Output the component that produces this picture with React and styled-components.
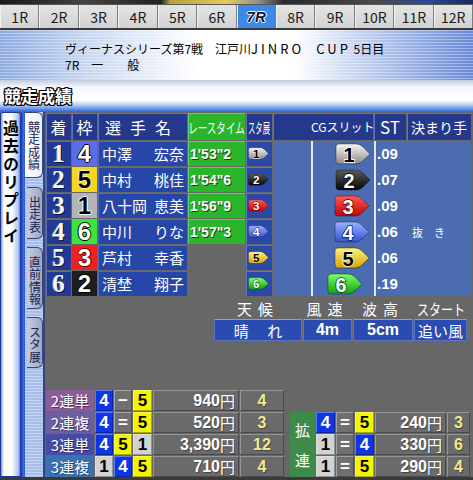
import React from "react";
import styled, { createGlobalStyle, css } from "styled-components";

const GlobalStyle = createGlobalStyle`
  html, body { margin: 0; padding: 0; }
  body { background: #676767; font-family: "Noto Sans CJK JP", "Noto Sans", sans-serif; }
  #root { width: 473px; height: 480px; overflow: hidden; }
`;

const Page = styled.div`
  width: 473px;
  height: 480px;
  display: flex;
  flex-direction: column;
  background: #676767;
  overflow: hidden;
`;

const TopStrip = styled.div`
  height: 4px;
  flex: none;
  background: linear-gradient(90deg, #1a1a1a 0%, #444 18%, #222 34%, #b8a040 36%, #e6cc5a 48%, #8a8a8a 55%, #2a2a2a 60%, #4a4a4a 80%, #2a4a9a 90%, #1a2a60 100%);
`;

const RaceTabs = styled.div`
  flex: none;
  height: 26px;
  box-sizing: border-box;
  display: grid;
  grid-template-columns: repeat(12, 1fr);
  border-top: 1px solid #555;
  border-bottom: 2px solid #3a3a3a;
  background: #d6d6d6;
`;

const RaceTab = styled.div`
  display: flex;
  align-items: center;
  justify-content: center;
  border-left: 1px solid #f2f2f2;
  border-right: 1px solid #7c7c7c;
  background: linear-gradient(#e4e4e4, #d2d2d2);
  font-size: 14px;
  line-height: 1;
  color: #1a1a1a;
  ${(p) =>
    p.$active &&
    css`
      background: #3c8ae6;
      font-family: "Liberation Sans", sans-serif;
      font-weight: bold;
      font-style: italic;
      font-size: 15px;
      color: #0a1838;
      text-shadow: 1px 0 0 #fff, -1px 0 0 #fff, 0 1px 0 #fff, 0 -1px 0 #fff;
    `}
`;

const TitleArea = styled.div`
  flex: none;
  height: 50px;
  box-sizing: border-box;
  padding: 11px 0 0 65px;
  font-size: 12px;
  line-height: 16px;
  color: #000;
  background:
    repeating-linear-gradient(180deg, rgba(255, 255, 255, 0.35) 0 1px, rgba(255, 255, 255, 0) 1px 3px),
    linear-gradient(90deg, #8eaae2 0%, #c8d6f0 18%, #ffffff 42%, #ffffff 62%, #c4d2f0 76%, #6a8ad8 100%);
`;

const TitleLine = styled.div`
  white-space: pre;
`;

const Latin = styled.span`
  font-size: 13px;
  letter-spacing: ${(p) => p.$ls}px;
`;

const SectionBar = styled.div`
  flex: none;
  height: 32px;
  box-sizing: border-box;
  padding: 4px 0 0 4px;
  background: linear-gradient(180deg, #c2cde2 0px, #f4f7fc 7px, #ffffff 20px, #b6cdf4 25px, #2a64e0 32px);
`;

const SectionTitle = styled.span`
  font-size: 17px;
  line-height: 20px;
  font-weight: bold;
  color: #fff;
  text-shadow: 1px 0 0 #000, -1px 0 0 #000, 0 1px 0 #000, 0 -1px 0 #000, 1px 1px 0 #000, -1px -1px 0 #000, 1px -1px 0 #000, -1px 1px 0 #000;
`;

const Main = styled.div`
  flex: 1;
  display: flex;
  min-height: 0;
`;

const BottomStrip = styled.div`
  flex: none;
  height: 3px;
  background: #3a3a3a;
`;

const ReplayPanel = styled.div`
  width: 21px;
  flex: none;
  border-radius: 3px 3px 0 0;
  box-shadow: inset 0 0 0 1px #1a3a9a;
  background: linear-gradient(90deg, #4a6ad0 0%, #ffffff 18%, #ffffff 55%, #b8c8f4 85%, #4a6ad8 100%);
  display: flex;
  justify-content: center;
  padding-top: 8px;
`;

const ReplayText = styled.div`
  writing-mode: vertical-rl;
  text-orientation: upright;
  font-size: 16px;
  line-height: 17px;
  font-weight: bold;
  letter-spacing: 2px;
  color: #000;
`;

const BlueStripe = styled.div`
  width: 4px;
  flex: none;
  background: linear-gradient(90deg, #1a3aa0, #3a6ae8 60%, #2a56d0);
`;

const TabColumn = styled.div`
  width: 20px;
  flex: none;
  box-sizing: border-box;
  border-right: 2px solid #34457e;
  background: repeating-linear-gradient(180deg, #c6d4f4 0 1px, #a9bde9 1px 3px);
  display: flex;
  flex-direction: column;
  gap: 8px;
`;

const SideTab = styled.div`
  height: ${(p) => p.$h}px;
  width: ${(p) => (p.$active ? 18 : 16)}px;
  margin-left: ${(p) => (p.$active ? 0 : 2)}px;
  margin-top: ${(p) => p.$mt || 0}px;
  box-sizing: border-box;
  border: 1px solid #3a4670;
  border-left: none;
  border-radius: 0 6px 6px 0;
  background: ${(p) => (p.$active ? "linear-gradient(90deg, #ffffff, #e8eefc)" : "linear-gradient(90deg, #c4cce0, #9ea8c4)")};
  display: flex;
  justify-content: center;
  padding-top: 8px;
`;

const SideTabText = styled.div`
  writing-mode: vertical-rl;
  text-orientation: upright;
  font-size: 12px;
  line-height: 14px;
  letter-spacing: 0.5px;
  color: #1a2450;
`;

const Content = styled.div`
  flex: 1;
  display: flex;
  flex-direction: column;
  margin-left: 1px;
  padding-top: 1px;
`;

const ResultGrid = styled.div`
  display: grid;
  grid-template-columns: 25px 25px 89px 57px 26px 100px 32px 64px;
  grid-template-rows: 27px repeat(6, 25px);
  gap: 1px;
`;

const HeadCell = styled.div`
  display: flex;
  align-items: center;
  justify-content: ${(p) => (p.$pl ? "flex-start" : "center")};
  padding-left: ${(p) => p.$pl || 0}px;
  background: ${(p) => (p.$green ? "#2ab52a" : "#25398c")};
  box-shadow: inset 1px 1px 0 rgba(255, 255, 255, 0.3);
  color: #fff;
  font-size: ${(p) => p.$fs || 16}px;
  line-height: 1;
  letter-spacing: ${(p) => p.$ls || 0}px;
  white-space: nowrap;
`;

const Squeeze = styled.span`
  display: inline-block;
  transform: scaleX(${(p) => p.$sx});
  transform-origin: center;
  white-space: nowrap;
`;

const RankCell = styled.div`
  display: flex;
  align-items: center;
  justify-content: center;
  background: #233a94;
  box-shadow: inset 1px 1px 0 rgba(255, 255, 255, 0.25);
  font-family: "Liberation Serif", serif;
  font-weight: bold;
  font-size: 25px;
  line-height: 22px;
  color: #f6f6f6;
  text-shadow: 1px 1px 0 #0a1440, -1px 0 0 #7080b0;
`;

const FRAME = {
  1: { bg: "#b4b4b4", fg: "#000", ol: "#fff" },
  2: { bg: "#1e1e1e", fg: "#fff", ol: "#000" },
  3: { bg: "#ee2020", fg: "#fff", ol: "#600" },
  4: { bg: "#5a6eea", fg: "#fff", ol: "#000" },
  5: { bg: "#f8d41e", fg: "#000", ol: "#fff2a0" },
  6: { bg: "#3ee43e", fg: "#fff", ol: "#000" },
};

const FrameCell = styled.div`
  display: flex;
  align-items: center;
  justify-content: center;
  background: ${(p) => FRAME[p.$n].bg};
  font-family: "Liberation Sans", sans-serif;
  font-weight: bold;
  font-size: 24px;
  line-height: 22px;
  color: ${(p) => FRAME[p.$n].fg};
  text-shadow: 1px 0 0 ${(p) => FRAME[p.$n].ol}, -1px 0 0 ${(p) => FRAME[p.$n].ol}, 0 1px 0 ${(p) => FRAME[p.$n].ol}, 0 -1px 0 ${(p) => FRAME[p.$n].ol};
`;

const NameCell = styled.div`
  display: flex;
  align-items: center;
  justify-content: space-between;
  padding: 0 3px 0 4px;
  background: #2646a8;
  box-shadow: inset 1px 1px 0 rgba(255, 255, 255, 0.2);
  color: #fff;
  font-size: 15px;
  line-height: 1;
`;

const TimeCell = styled.div`
  display: flex;
  align-items: center;
  padding-left: 2px;
  background: ${(p) => (p.$empty ? "transparent" : "#2ab52a")};
  box-shadow: ${(p) => (p.$empty ? "none" : "inset 1px 1px 0 rgba(255,255,255,0.3)")};
  color: #fff;
  font-family: "Liberation Sans", sans-serif;
  font-weight: bold;
  font-size: 14px;
  text-shadow: 1px 1px 0 #0a4a0a;
`;

const ExCell = styled.div`
  display: flex;
  align-items: center;
  padding-left: 2px;
  background: #2b4aa8;
  box-shadow: inset 1px 1px 0 rgba(255, 255, 255, 0.25);
`;

const SlitPanel = styled.div`
  grid-column: 6 / span 3;
  grid-row: 2 / span 6;
  display: flex;
  background: #4b6cb0;
`;

const SlitGap = styled.div`
  width: 38px;
  flex: none;
`;

const Lane = styled.div`
  width: ${(p) => (p.$w ? `${p.$w}px` : "auto")};
  flex: ${(p) => (p.$w ? "none" : 1)};
  box-sizing: border-box;
  border-left: 2px solid #e4eaf8;
  display: flex;
  flex-direction: column;
  gap: 1px;
`;

const LaneRow = styled.div`
  height: 25px;
  display: flex;
  align-items: center;
  padding-left: ${(p) => p.$pl || 0}px;
`;

const StValue = styled.span`
  width: 35px;
  flex: none;
  color: #fff;
  font-family: "Liberation Sans", sans-serif;
  font-weight: bold;
  font-size: 15px;
`;

const Kimarite = styled.span`
  color: #fff;
  font-size: 11px;
  white-space: pre;
`;

const WeatherGrid = styled.div`
  margin: 3px 0 0 168px;
  display: grid;
  grid-template-columns: 88px 49px 60px 53px;
  grid-template-rows: 19px 22px;
  column-gap: 1px;
  row-gap: 1px;
`;

const WeatherLabel = styled.div`
  display: flex;
  align-items: center;
  justify-content: center;
  color: #fff;
  font-size: 15px;
  line-height: 1;
  letter-spacing: ${(p) => p.$ls || 0}px;
  white-space: nowrap;
`;

const WeatherValue = styled.div`
  display: flex;
  align-items: center;
  justify-content: center;
  box-sizing: border-box;
  border: 1px solid #5a72c0;
  border-top-color: #8a9ee0;
  background: #2a4cb0;
  color: #fff;
  font-size: 15px;
  line-height: 1;
  white-space: pre;
  ${(p) =>
    p.$bold &&
    css`
      font-family: "Liberation Sans", sans-serif;
      font-weight: bold;
      font-size: 16px;
    `}
`;

const PayoutArea = styled.div`
  margin-top: auto;
  display: flex;
  align-items: flex-end;
  gap: 6px;
`;

const PayGrid = styled.div`
  display: grid;
  grid-template-columns: ${(p) => p.$cols};
  grid-auto-rows: 21px;
  gap: 1px;
`;

const BetLabel = styled.div`
  display: flex;
  align-items: center;
  justify-content: center;
  background: ${(p) => p.$bg};
  color: #fff;
  font-size: 15px;
  line-height: 1;
  text-shadow: 1px 1px 0 rgba(0, 0, 0, 0.45);
`;

const WideLabel = styled.div`
  grid-row: span 3;
  display: flex;
  flex-direction: column;
  align-items: center;
  justify-content: space-around;
  padding: 2px 0;
  background: #3e8a4a;
  color: #fff;
  font-size: 15px;
  line-height: 1;
`;

const NUM = {
  b: { bg: "#0e36e6", fg: "#fff" },
  y: { bg: "#f4f400", fg: "#000" },
  w: { bg: "#d2d2d2", fg: "#000" },
  s: { bg: "#707070", fg: "#fff" },
};

const NumCell = styled.div`
  display: flex;
  align-items: center;
  justify-content: center;
  box-sizing: border-box;
  border: 1px solid rgba(255, 255, 255, 0.35);
  border-right-color: rgba(0, 0, 0, 0.3);
  border-bottom-color: rgba(0, 0, 0, 0.3);
  background: ${(p) => NUM[p.$c].bg};
  color: ${(p) => NUM[p.$c].fg};
  font-family: "Liberation Sans", sans-serif;
  font-weight: bold;
  font-size: 17px;
  line-height: 1;
`;

const GrayCell = styled.div`
  display: flex;
  align-items: center;
  justify-content: ${(p) => (p.$right ? "flex-end" : "center")};
  padding-right: ${(p) => (p.$right ? 3 : 0)}px;
  box-sizing: border-box;
  border: 1px solid #959595;
  border-right-color: #4a4a4a;
  border-bottom-color: #4a4a4a;
  background: #6a6a6a;
  color: ${(p) => (p.$yellow ? "#f2ea8a" : "#fff")};
  font-family: "Liberation Sans", "Noto Sans CJK JP", sans-serif;
  font-weight: bold;
  font-size: 16px;
  line-height: 1;
  text-shadow: 1px 1px 0 rgba(0, 0, 0, 0.35);
`;

const Yen = styled.span`
  font-family: "Noto Sans CJK JP", sans-serif;
  font-weight: normal;
  font-size: 15px;
`;

const BOAT = {
  1: { top: "#f6f6f6", bot: "#8a8a8a", num: "#000", stroke: "#fff" },
  2: { top: "#5a5a5a", bot: "#050505", num: "#fff", stroke: "#000" },
  3: { top: "#ff5a5a", bot: "#c40000", num: "#fff", stroke: "#5a0000" },
  4: { top: "#9ab0ff", bot: "#3452d4", num: "#fff", stroke: "#10207a" },
  5: { top: "#fff27a", bot: "#d8a400", num: "#000", stroke: "#fff6c0" },
  6: { top: "#7aff6a", bot: "#12a012", num: "#fff", stroke: "#064006" },
};

function Boat({ n, w, h, tag }) {
  const c = BOAT[n];
  const id = `boat-${tag}-${n}`;
  return (
    <svg width={w} height={h} viewBox="0 0 36 22">
      <defs>
        <linearGradient id={id} x1="0" y1="0" x2="0" y2="1">
          <stop offset="0" stopColor={c.top} />
          <stop offset="1" stopColor={c.bot} />
        </linearGradient>
      </defs>
      <path
        d="M4 1 H21 Q25 1 28 4 L35 11 L28 18 Q25 21 21 21 H4 Q1 21 1 18 V4 Q1 1 4 1 Z"
        fill={`url(#${id})`}
        stroke="rgba(0,0,0,0.45)"
        strokeWidth="0.8"
      />
      <text
        x="14"
        y="18.5"
        textAnchor="middle"
        fontFamily="Liberation Sans, sans-serif"
        fontWeight="bold"
        fontSize="20"
        fill={c.num}
        stroke={c.stroke}
        strokeWidth="1.6"
        paintOrder="stroke"
      >
        {n}
      </text>
    </svg>
  );
}

const RACES = ["1R", "2R", "3R", "4R", "5R", "6R", "7R", "8R", "9R", "10R", "11R", "12R"];

const RESULTS = [
  { rank: 1, frame: 4, last: "中澤", first: "宏奈", time: `1'53"2` },
  { rank: 2, frame: 5, last: "中村", first: "桃佳", time: `1'54"6` },
  { rank: 3, frame: 1, last: "八十岡", first: "恵美", time: `1'56"9` },
  { rank: 4, frame: 6, last: "中川", first: "りな", time: `1'57"3` },
  { rank: 5, frame: 3, last: "芦村", first: "幸香", time: "" },
  { rank: 6, frame: 2, last: "清埜", first: "翔子", time: "" },
];

const SLIT_ORDER = [1, 2, 3, 4, 5, 6];
const SLIT_OFFSET = { 1: 22, 2: 22, 3: 21, 4: 21, 5: 21, 6: 14 };
const SLIT_ST = { 1: ".09", 2: ".07", 3: ".09", 4: ".06", 5: ".06", 6: ".19" };
const SLIT_K = { 4: "抜　き" };

const PAYOUTS = [
  { label: "2連単", bg: "#8c5c98", nums: [["4", "b"], ["−", "s"], ["5", "y"]], amt: "940", pop: "4" },
  { label: "2連複", bg: "#6c5ea0", nums: [["4", "b"], ["=", "s"], ["5", "y"]], amt: "520", pop: "3" },
  { label: "3連単", bg: "#464ca6", nums: [["4", "b"], ["5", "y"], ["1", "w"]], amt: "3,390", pop: "12" },
  { label: "3連複", bg: "#3872b4", nums: [["1", "w"], ["4", "b"], ["5", "y"]], amt: "710", pop: "4" },
];

const WIDE = [
  { nums: [["4", "b"], ["=", "s"], ["5", "y"]], amt: "240", pop: "3" },
  { nums: [["1", "w"], ["=", "s"], ["4", "b"]], amt: "330", pop: "6" },
  { nums: [["1", "w"], ["=", "s"], ["5", "y"]], amt: "290", pop: "4" },
];

export default function App() {
  return (
    <Page>
      <GlobalStyle />
      <TopStrip />
      <RaceTabs>
        {RACES.map((r) => (
          <RaceTab key={r} $active={r === "7R"}>
            {r}
          </RaceTab>
        ))}
      </RaceTabs>
      <TitleArea>
        <TitleLine>
          ヴィーナスシリーズ第7戦　江戸川<Latin $ls={3}>JINRO</Latin>　<Latin $ls={3}>CUP</Latin> 5日目
        </TitleLine>
        <TitleLine>7R　一　　般</TitleLine>
      </TitleArea>
      <SectionBar>
        <SectionTitle>競走成績</SectionTitle>
      </SectionBar>
      <Main>
        <ReplayPanel>
          <ReplayText>過去のリプレイ</ReplayText>
        </ReplayPanel>
        <BlueStripe />
        <TabColumn>
          <SideTab $h={66} $active>
            <SideTabText>競走成績</SideTabText>
          </SideTab>
          <SideTab $h={52} $mt={1}>
            <SideTabText>出走表</SideTabText>
          </SideTab>
          <SideTab $h={62}>
            <SideTabText>直前情報</SideTabText>
          </SideTab>
          <SideTab $h={51}>
            <SideTabText>スタ展</SideTabText>
          </SideTab>
        </TabColumn>
        <Content>
          <ResultGrid>
            <HeadCell>着</HeadCell>
            <HeadCell>枠</HeadCell>
            <HeadCell $ls={9}>選手名</HeadCell>
            <HeadCell $green $fs={14}>
              <Squeeze $sx={0.68}>レースタイム</Squeeze>
            </HeadCell>
            <HeadCell $fs={14}>
              <Squeeze $sx={0.52}>スタ展</Squeeze>
            </HeadCell>
            <HeadCell $fs={12} $pl={38}>
              CGスリット
            </HeadCell>
            <HeadCell $fs={17}>ST</HeadCell>
            <HeadCell $fs={14}>決まり手</HeadCell>

            {RESULTS.map((r, i) => (
              <React.Fragment key={r.rank}>
                <RankCell>{r.rank}</RankCell>
                <FrameCell $n={r.frame}>{r.frame}</FrameCell>
                <NameCell>
                  <span>{r.last}</span>
                  <span>{r.first}</span>
                </NameCell>
                <TimeCell $empty={!r.time}>{r.time}</TimeCell>
                <ExCell>
                  <Boat n={i + 1} w={21} h={13} tag="ex" />
                </ExCell>
              </React.Fragment>
            ))}

            <SlitPanel>
              <SlitGap />
              <Lane $w={63}>
                {SLIT_ORDER.map((n) => (
                  <LaneRow key={n} $pl={SLIT_OFFSET[n]}>
                    <Boat n={n} w={36} h={22} tag="slit" />
                  </LaneRow>
                ))}
              </Lane>
              <Lane>
                {SLIT_ORDER.map((n) => (
                  <LaneRow key={n} $pl={1}>
                    <StValue>{SLIT_ST[n]}</StValue>
                    {SLIT_K[n] && <Kimarite>{SLIT_K[n]}</Kimarite>}
                  </LaneRow>
                ))}
              </Lane>
            </SlitPanel>
          </ResultGrid>

          <WeatherGrid>
            <WeatherLabel $ls={6}>天候</WeatherLabel>
            <WeatherLabel $ls={6}>風速</WeatherLabel>
            <WeatherLabel $ls={6}>波高</WeatherLabel>
            <WeatherLabel>
              <Squeeze $sx={0.8}>スタート</Squeeze>
            </WeatherLabel>
            <WeatherValue>晴　 れ</WeatherValue>
            <WeatherValue $bold>4m</WeatherValue>
            <WeatherValue $bold>5cm</WeatherValue>
            <WeatherValue>追い風</WeatherValue>
          </WeatherGrid>

          <PayoutArea>
            <PayGrid $cols="48px 18px 18px 19px 86px 44px">
              {PAYOUTS.map((p) => (
                <React.Fragment key={p.label}>
                  <BetLabel $bg={p.bg}>{p.label}</BetLabel>
                  {p.nums.map(([v, c], j) => (
                    <NumCell key={j} $c={c}>
                      {v}
                    </NumCell>
                  ))}
                  <GrayCell $right>
                    {p.amt}
                    <Yen>円</Yen>
                  </GrayCell>
                  <GrayCell $yellow>{p.pop}</GrayCell>
                </React.Fragment>
              ))}
            </PayGrid>
            <PayGrid $cols="25px 19px 18px 19px 71px 23px">
              {WIDE.map((p, i) => (
                <React.Fragment key={i}>
                  {i === 0 && (
                    <WideLabel>
                      <span>拡</span>
                      <span>連</span>
                    </WideLabel>
                  )}
                  {p.nums.map(([v, c], j) => (
                    <NumCell key={j} $c={c}>
                      {v}
                    </NumCell>
                  ))}
                  <GrayCell $right>
                    {p.amt}
                    <Yen>円</Yen>
                  </GrayCell>
                  <GrayCell $yellow>{p.pop}</GrayCell>
                </React.Fragment>
              ))}
            </PayGrid>
          </PayoutArea>
        </Content>
      </Main>
      <BottomStrip />
    </Page>
  );
}
